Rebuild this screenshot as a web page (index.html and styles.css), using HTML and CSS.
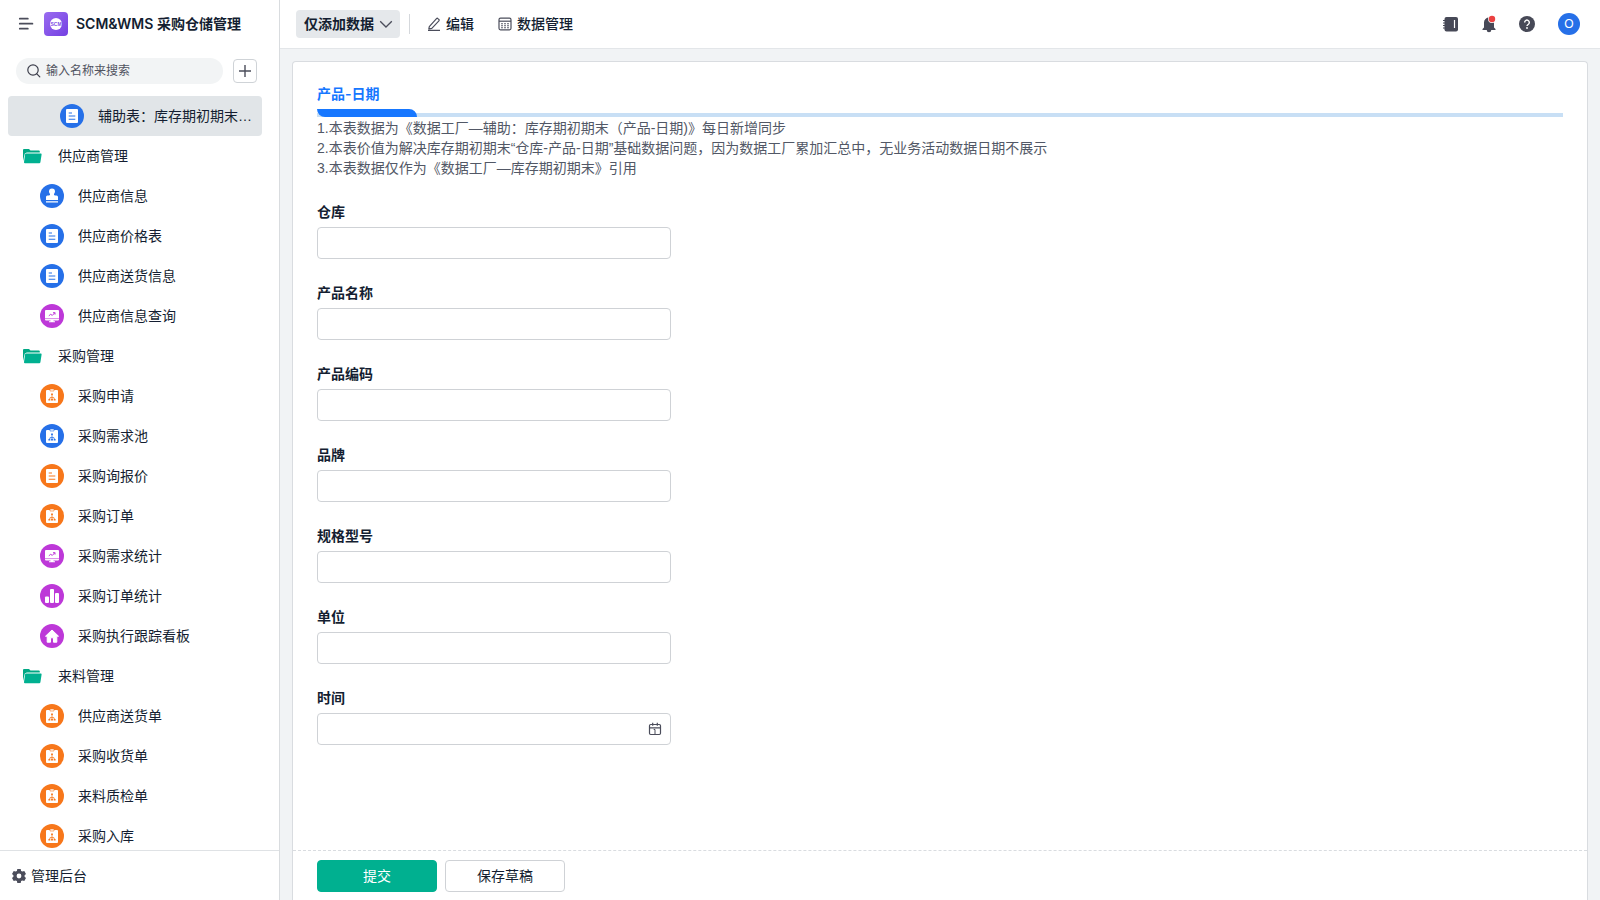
FILE: index.html
```html
<!DOCTYPE html>
<html lang="zh-CN">
<head>
<meta charset="utf-8">
<title>SCM&amp;WMS 采购仓储管理</title>
<link rel="stylesheet" href="styles.css">
</head>
<body>
<svg class="sprite" aria-hidden="true">
  <symbol id="form" viewBox="0 0 24 24"><path fill="#fff" d="M7 5h10a1 1 0 0 1 1 1v12a1 1 0 0 1-1 1H7a1 1 0 0 1-1-1V6a1 1 0 0 1 1-1z"/><path stroke="currentColor" stroke-width="1.1" d="M8.700 9h3.300M8.700 12h6.600M8.700 15.300h6.600"/></symbol>
  <symbol id="flow" viewBox="0 0 24 24"><path fill="#fff" d="M7 6h10a1 1 0 0 1 1 1v11a1 1 0 0 1-1 1H7a1 1 0 0 1-1-1V7a1 1 0 0 1 1-1z"/><path fill="#fff" stroke="currentColor" stroke-width=".6" d="M10 5h4v2h-4z"/><path fill="none" stroke="currentColor" stroke-width=".8" d="M12 10.500v4.500M9.500 15.500l.6-1.900h3.800l.6 1.900"/><path fill="currentColor" d="M11.100 9.500h1.800v1.600h-1.800zM8.400 15h1.900v1.600H8.400zM11.050 15h1.900v1.600h-1.900zM13.700 15h1.900v1.600h-1.900z"/></symbol>
  <symbol id="stamp" viewBox="0 0 24 24"><path fill="#fff" d="M12 4.500a3 3 0 0 0-3 3c0 1.200.7 1.800 1 2.500.2.800-.2 1.400-1 1.400H7.500A1.500 1.500 0 0 0 6 12.900V16h12v-3.100a1.500 1.500 0 0 0-1.500-1.500H15c-.8 0-1.200-.6-1-1.400.3-.7 1-1.300 1-2.500a3 3 0 0 0-3-3zM6 17.200h12v1.400H6z"/></symbol>
  <symbol id="screen" viewBox="0 0 24 24"><path fill="#fff" d="M6 6h12a1 1 0 0 1 1 1v8.500a1 1 0 0 1-1 1h-4.500v.8H15v1H9v-1h1.500v-.8H6a1 1 0 0 1-1-1V7a1 1 0 0 1 1-1z"/><path stroke="currentColor" stroke-width=".6" d="M5 14.600h14"/><path fill="none" stroke="currentColor" stroke-width="1" d="M8.800 11.800l1.900-1.500 1.600 1.100 2.500-2.600M13 8.700h2v1.900"/></symbol>
  <symbol id="chart" viewBox="0 0 24 24"><rect x="5" y="12.500" width="4" height="6.500" rx="1" fill="#fff"/><rect x="10" y="5" width="4" height="14" rx="1" fill="#fff"/><rect x="15" y="9" width="4" height="10" rx="1" fill="#fff"/></symbol>
  <symbol id="home" viewBox="0 0 24 24"><path fill="#fff" stroke="#fff" stroke-width="1" stroke-linejoin="round" d="M12 6L5.500 12.200H7.200v6h3.300v-4.400h3v4.400h3.300v-6h1.700z"/></symbol>
  <symbol id="folder" viewBox="0 0 20 16"><path fill="#00a884" d="M1 13V2a1 1 0 0 1 1-1h5l1.500 1.500h8.300a1 1 0 0 1 1 1v1H4.800L2.800 5.600z"/><path fill="#00b090" d="M4 5.400h14.700a.9.900 0 0 1 .9 1.100l-1.200 7.800a1.200 1.200 0 0 1-1.200 1H3a1 1 0 0 1-1-1.100l1.100-8a.9.900 0 0 1 .9-.8z"/></symbol>
</svg>
<div class="app">
  <aside class="sidebar">
    <header class="brand">
      <button class="icon-btn" type="button" aria-label="菜单"><svg width="16" height="14" viewBox="0 0 16 14"><path d="M1.800 1.700h8M1.800 6.700h12.600M1.800 11.700h8" stroke="#4b4d5b" stroke-width="1.800" stroke-linecap="round"/></svg></button>
      <span class="logo"><span class="logo-disc">SCM</span></span>
      <h1 class="brand-name">SCM&amp;WMS 采购仓储管理</h1>
    </header>
    <div class="search-row">
      <label class="search"><svg width="14" height="14" viewBox="0 0 14 14"><circle cx="6" cy="6" r="5.200" fill="none" stroke="#3c3e4b" stroke-width="1.200"/><path d="M9.800 9.800l3 3" stroke="#3c3e4b" stroke-width="1.200" stroke-linecap="round"/></svg><input type="text" placeholder="输入名称来搜索" aria-label="输入名称来搜索"></label>
      <button class="add" type="button" aria-label="新建"><svg width="14" height="14" viewBox="0 0 14 14"><path d="M7 1v12M1 7h12" stroke="#4b4d5b" stroke-width="1.400"/></svg></button>
    </div>
    <nav class="menu">
      <a href="#" class="item deep selected"><svg class="badge blue"><use href="#form"/></svg><span>辅助表：库存期初期末（产品-日期）</span></a>
      <a href="#" class="item group"><svg class="folder"><use href="#folder"/></svg><span>供应商管理</span></a>
      <a href="#" class="item"><svg class="badge blue"><use href="#stamp"/></svg><span>供应商信息</span></a>
      <a href="#" class="item"><svg class="badge blue"><use href="#form"/></svg><span>供应商价格表</span></a>
      <a href="#" class="item"><svg class="badge blue"><use href="#form"/></svg><span>供应商送货信息</span></a>
      <a href="#" class="item"><svg class="badge purple"><use href="#screen"/></svg><span>供应商信息查询</span></a>
      <a href="#" class="item group"><svg class="folder"><use href="#folder"/></svg><span>采购管理</span></a>
      <a href="#" class="item"><svg class="badge orange"><use href="#flow"/></svg><span>采购申请</span></a>
      <a href="#" class="item"><svg class="badge blue"><use href="#flow"/></svg><span>采购需求池</span></a>
      <a href="#" class="item"><svg class="badge orange"><use href="#form"/></svg><span>采购询报价</span></a>
      <a href="#" class="item"><svg class="badge orange"><use href="#flow"/></svg><span>采购订单</span></a>
      <a href="#" class="item"><svg class="badge purple"><use href="#screen"/></svg><span>采购需求统计</span></a>
      <a href="#" class="item"><svg class="badge purple"><use href="#chart"/></svg><span>采购订单统计</span></a>
      <a href="#" class="item"><svg class="badge purple"><use href="#home"/></svg><span>采购执行跟踪看板</span></a>
      <a href="#" class="item group"><svg class="folder"><use href="#folder"/></svg><span>来料管理</span></a>
      <a href="#" class="item"><svg class="badge orange"><use href="#flow"/></svg><span>供应商送货单</span></a>
      <a href="#" class="item"><svg class="badge orange"><use href="#flow"/></svg><span>采购收货单</span></a>
      <a href="#" class="item"><svg class="badge orange"><use href="#flow"/></svg><span>来料质检单</span></a>
      <a href="#" class="item"><svg class="badge orange"><use href="#flow"/></svg><span>采购入库</span></a>
    </nav>
    <a href="#" class="admin"><svg width="14" height="14" viewBox="0 0 14 14"><path fill="#4b4d5b" fill-rule="evenodd" d="M5.300 0h3.400l.4 1.900 1.300.7 1.900-.6L14 4.900l-1.400 1.300v1.600L14 9.100 12.300 12l-1.900-.6-1.300.7L8.700 14H5.300l-.4-1.900-1.300-.7-1.900.6L0 9.100l1.400-1.300V6.200L0 4.900 1.700 2l1.900.6 1.300-.7zM7 4.600a2.400 2.400 0 1 0 0 4.800 2.400 2.400 0 0 0 0-4.800z"/></svg>管理后台</a>
  </aside>
  <div class="content">
    <header class="topbar">
      <button class="mode" type="button">仅添加数据<svg width="14" height="14" viewBox="0 0 14 14"><path d="M1.200 4.200L7 10l5.800-5.800" fill="none" stroke="#4b4d5b" stroke-width="1.300"/></svg></button>
      <span class="divider"></span>
      <button class="tool" type="button"><svg width="14" height="14" viewBox="0 0 14 14"><path d="M2.300 9.600l7.200-8a1 1 0 0 1 1.400 0l1 .9a1 1 0 0 1 0 1.400L4.800 11.400l-3 .6zM1 13.400h12" fill="none" stroke="#4b4d5b" stroke-width="1.200" stroke-linejoin="round"/></svg>编辑</button>
      <button class="tool" type="button"><svg width="14" height="14" viewBox="0 0 14 14"><rect x="1" y="1.200" width="12" height="11.600" rx="1.500" fill="none" stroke="#4b4d5b" stroke-width="1.200"/><path d="M1 4.200h12" stroke="#4b4d5b" stroke-width="1.200"/><path d="M3.100 6.800h7.800M3.100 8.800h7.800M3.100 10.800h7.800" stroke="#4b4d5b" stroke-width="1.100" stroke-dasharray="1.800 1.200"/></svg>数据管理</button>
      <div class="actions">
        <button class="icon-btn" type="button" aria-label="通讯录"><svg width="16" height="16" viewBox="0 0 16 16"><rect x="1.500" y="1" width="13.500" height="14.500" rx="2" fill="#474957"/><path d="M11.500 4v8" stroke="#fff" stroke-width="1.200"/><path d="M0 4.500h3M0 7h3M0 9.500h3M0 12h3" stroke="#474957" stroke-width="1"/></svg></button>
        <button class="icon-btn" type="button" aria-label="通知"><svg width="16" height="18" viewBox="0 0 16 18"><path fill="#474957" d="M8 2.500A5 5 0 0 0 3 7.500v5L1.500 14v1h4.200a2.300 2.300 0 0 0 4.600 0h4.200v-1L13 12.500v-5a5 5 0 0 0-5-5z"/><circle cx="11" cy="4" r="3.900" fill="#fff"/><circle cx="11" cy="4" r="3.200" fill="#eb4141"/></svg></button>
        <button class="icon-btn" type="button" aria-label="帮助"><svg width="16" height="16" viewBox="0 0 16 16"><circle cx="8" cy="8" r="8" fill="#474957"/><path d="M5.700 6.500A2.300 2.300 0 1 1 9.400 8.200C8.400 8.900 8 9.200 8 10" fill="none" stroke="#fff" stroke-width="1.400"/><circle cx="8" cy="12" r=".9" fill="#fff"/></svg></button>
        <button class="avatar" type="button">O</button>
      </div>
    </header>
    <main class="page">
      <form class="card">
        <div class="fields">
          <h2 class="section-title">产品-日期</h2>
          <div class="rule"><span class="rule-mark"></span></div>
          <p class="notes">1.本表数据为《数据工厂—辅助：库存期初期末（产品-日期)》每日新增同步<br>2.本表价值为解决库存期初期末“仓库-产品-日期”基础数据问题，因为数据工厂累加汇总中，无业务活动数据日期不展示<br>3.本表数据仅作为《数据工厂—库存期初期末》引用</p>
          <div class="field"><label for="f1">仓库</label><input id="f1" type="text"></div>
          <div class="field"><label for="f2">产品名称</label><input id="f2" type="text"></div>
          <div class="field"><label for="f3">产品编码</label><input id="f3" type="text"></div>
          <div class="field"><label for="f4">品牌</label><input id="f4" type="text"></div>
          <div class="field"><label for="f5">规格型号</label><input id="f5" type="text"></div>
          <div class="field"><label for="f6">单位</label><input id="f6" type="text"></div>
          <div class="field"><label for="f7">时间</label><div class="date"><input id="f7" type="text"><svg width="14" height="14" viewBox="0 0 14 14"><rect x="1.500" y="2.500" width="11" height="10" rx="1.200" fill="none" stroke="#4b4d5b" stroke-width="1.200"/><path d="M1.500 5.800h11M4.700 .8v3M9.300 .8v3" stroke="#4b4d5b" stroke-width="1.200"/><path d="M5.700 7.500H7v5" fill="none" stroke="#4b4d5b" stroke-width="1"/></svg></div></div>
        </div>
        <footer class="form-foot">
          <button class="btn primary" type="submit">提交</button>
          <button class="btn" type="button">保存草稿</button>
        </footer>
      </form>
    </main>
  </div>
</div>
</body>
</html>
```
FILE: styles.css
```css
* { box-sizing: border-box; }
body {
  margin: 0;
  font: 14px/20px "Liberation Sans", "Noto Sans CJK SC", sans-serif;
  color: #141e31;
}
button, input { font: inherit; color: inherit; }
button { border: 0; padding: 0; background: none; cursor: pointer; }
a { color: inherit; text-decoration: none; }
svg { display: block; flex: none; }
h1, h2, p { margin: 0; font-size: 14px; }
.sprite { position: absolute; width: 0; height: 0; }

.app { display: flex; height: 100vh; overflow: hidden; }
.sidebar {
  flex: none;
  display: flex;
  flex-direction: column;
  width: 280px;
  border-right: 1px solid #d9dcdf;
}
.brand { display: flex; align-items: center; height: 48px; padding-left: 18px; }
.icon-btn { display: flex; align-items: center; justify-content: center; }
.logo {
  display: flex;
  align-items: center;
  justify-content: center;
  width: 24px;
  height: 24px;
  margin: 0 8px 0 10px;
  border-radius: 4px;
  background: linear-gradient(135deg, #9a6cf0, #7440e2);
}
.logo-disc {
  width: 12px;
  height: 12px;
  display: flex;
  align-items: center;
  justify-content: center;
  border-radius: 50%;
  background: #fff;
  color: #7f4ee6;
  font-size: 5px;
  font-weight: 700;
  line-height: 12px;
}
.brand-name, .section-title { font-family: Inter, "Noto Sans CJK SC", sans-serif; font-weight: 600; white-space: nowrap; }
.search-row { display: flex; align-items: center; gap: 10px; height: 48px; padding: 0 22px 2px 16px; }
.search {
  flex: 1;
  min-width: 0;
  display: flex;
  align-items: center;
  gap: 5px;
  height: 26px;
  padding: 0 11px;
  border-radius: 13px;
  background: #f2f4f5;
}
.search input { flex: 1; min-width: 0; padding: 0; border: 0; background: none; outline: 0; font-size: 12px; }
.search input::placeholder { color: #50535f; opacity: 1; }
.add {
  flex: none;
  display: flex;
  align-items: center;
  justify-content: center;
  width: 24px;
  height: 24px;
  border: 1px solid #cfd3d7;
  border-radius: 4px;
}
.menu { flex: 1; min-height: 0; overflow: hidden; padding: 0 17px 0 8px; }
.item { display: flex; align-items: center; gap: 14px; height: 40px; padding: 0 8px 0 32px; }
.item span { overflow: hidden; white-space: nowrap; text-overflow: ellipsis; }
.group { gap: 16px; padding-left: 14px; }
.deep { padding-left: 52px; }
.selected { border-radius: 4px; background: #e1e5e8; }
.badge { width: 24px; height: 24px; border-radius: 50%; }
.blue { background: #2670e8; color: #2670e8; }
.orange { background: #f7771b; color: #f7771b; }
.purple { background: #bd38d8; color: #bd38d8; }
.folder { width: 20px; height: 16px; }
.admin {
  display: flex;
  align-items: center;
  gap: 5px;
  height: 50px;
  padding-left: 12px;
  border-top: 1px solid #dfe2e5;
}

.content { flex: 1; min-width: 0; display: flex; flex-direction: column; background: #f1f3f5; }
.topbar {
  display: flex;
  align-items: center;
  height: 49px;
  padding: 0 20px 0 16px;
  border-bottom: 1px solid #e3e6e9;
  background: #fff;
}
.mode {
  display: flex;
  align-items: center;
  gap: 5px;
  height: 28px;
  padding: 0 7px 0 8px;
  border-radius: 4px;
  background: #e5e8eb;
  font-weight: 700;
}
.divider { width: 1px; height: 20px; margin: 0 17px 0 9px; background: #d5d8dc; }
.tool { display: flex; align-items: center; gap: 5px; margin-right: 24px; font-weight: 500; }
.actions { display: flex; align-items: center; gap: 22px; margin-left: auto; }
.avatar { width: 22px; height: 22px; margin-left: 1px; border-radius: 50%; background: #2670e8; color: #fff; font-size: 12px; }

.page { flex: 1; min-height: 0; display: flex; padding: 12px 12px 0; }
.card {
  flex: 1;
  min-width: 0;
  display: flex;
  flex-direction: column;
  border: 1px solid #d9dce0;
  border-bottom: 0;
  border-radius: 4px 4px 0 0;
  background: #fff;
}
.fields { flex: 1; min-height: 0; padding: 22px 24px 0; }
.section-title { color: #1677ff; }
.rule { display: flex; height: 8px; margin-top: 5px; background: linear-gradient(#c8dff5, #c8dff5) bottom / 100% 4px no-repeat; }
.rule-mark { width: 100px; border-radius: 0 8px 0 8px; background: #1677ff; }
.notes { margin: 1px 0 24px; color: #525866; }
.field { display: flex; flex-direction: column; gap: 5px; width: 354px; margin-bottom: 24px; }
.field label { font-weight: 700; }
.field input {
  width: 100%;
  height: 32px;
  padding: 0 10px;
  border: 1px solid #cfd2d6;
  border-radius: 4px;
  background: #fff;
}
.date { position: relative; }
.date input { display: block; }
.date svg { position: absolute; top: 9px; right: 9px; }
.form-foot { display: flex; gap: 8px; height: 50px; padding: 9px 24px; border-top: 1px dashed #d9dce0; }
.btn { width: 120px; height: 32px; border: 1px solid #cfd2d6; border-radius: 4px; }
.primary { border-color: #00b090; background: #00b090; color: #fff; }
```
